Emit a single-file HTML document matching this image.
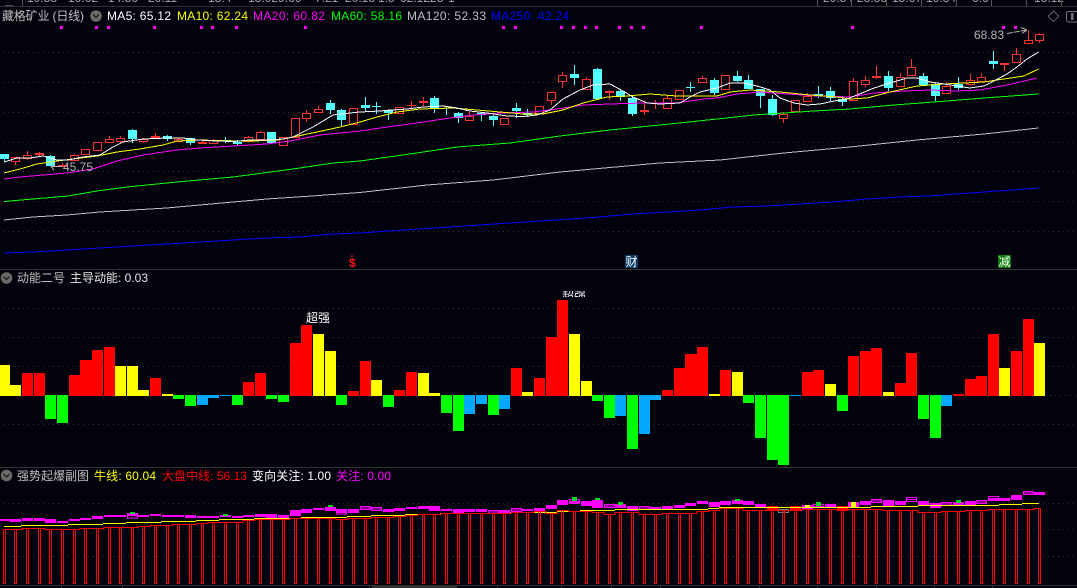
<!DOCTYPE html>
<html lang="zh"><head><meta charset="utf-8"><title>藏格矿业 (日线)</title>
<style>
html,body{margin:0;padding:0;background:#02030c;width:1077px;height:588px;overflow:hidden}
svg{display:block;shape-rendering:crispEdges}
text{font-family:"Liberation Sans","Noto Sans CJK SC",sans-serif;font-size:12px}
.r{shape-rendering:auto}
</style></head><body>
<svg width="1077" height="588" viewBox="0 0 1077 588" xmlns="http://www.w3.org/2000/svg">
<defs><clipPath id="cp"><rect x="555" y="291" width="40" height="6"/></clipPath></defs>
<rect width="1077" height="588" fill="#02030c"/>

<!-- top strip -->
<g fill="#a8a8a8" font-size="11">
<text x="27" y="2">19.58</text><text x="68" y="2">10.62</text><text x="108" y="2">14.56</text><text x="148" y="2">20.11</text><text x="208" y="2">18.4</text><text x="248" y="2">13.02</text><text x="278" y="2">9.66</text><text x="315" y="2">7.21</text><text x="345" y="2">20.18</text>
<text x="378" y="2">1.5</text><text x="400" y="2">62.1225</text><text x="448" y="2">1</text>
<text x="823" y="2">20.54</text><text x="857" y="2">23.88</text><text x="892" y="2">15.67</text><text x="926" y="2">10.34</text><text x="972" y="2">6.6</text><text x="1034" y="2">13.12</text>
</g>
<path d="M5 5.5h8M22.500 0V6M817.500 0V6M851.500 0V6M886.500 0V6M921.500 0V6M956.500 0V6M991.500 0V6M1026.500 0V6M1061.500 0V6" stroke="#555" fill="none"/>
<path d="M0 6.500H1077M0 269.500H1077M0 467.500H1077M0 585.500H1077" stroke="#333" fill="none"/>

<!-- grid -->
<path d="M3 52.500H1077M3 82.500H1077M3 112.500H1077M3 142.500H1077M3 171.500H1077M3 201.500H1077M3 231.500H1077M3 308.500H1077M3 337.500H1077M3 366.500H1077M1050 395.500H1077M3 424.500H1077M3 503.500H1077M3 529.500H1077M3 556.500H1077" stroke="#333" stroke-dasharray="1 4" fill="none"/>

<!-- magenta signal dots -->
<path fill="#f0f" d="M60 26h3v3h-3zM95 26h3v3h-3zM107 26h3v3h-3zM153 26h3v3h-3zM200 26h3v3h-3zM211 26h3v3h-3zM235 26h3v3h-3zM304 26h3v3h-3zM502 26h3v3h-3zM514 26h3v3h-3zM560 26h3v3h-3zM572 26h3v3h-3zM584 26h3v3h-3zM595 26h3v3h-3zM618 26h3v3h-3zM630 26h3v3h-3zM642 26h3v3h-3zM700 26h3v3h-3zM851 26h3v3h-3zM1002 26h3v3h-3zM1014 26h3v3h-3z"/>

<!-- candles cyan -->
<path fill="#54ffff" d="M0 154h9V159h-9zM46 156h9V166h-9zM128 130h9V139h-9zM163 136h9V139h-9zM186 138h9V143h-9zM221 140h10V141h-10zM233 142h9V144h-9zM267 132h9V143h-9zM326 103h9V110h-9zM337 110h9V120h-9zM361 105h9V108h-9zM372 106h9V107h-9zM384 110h9V113h-9zM430 98h9V108h-9zM454 113h9V118h-9zM477 113h9V115h-9zM489 116h9V120h-9zM512 108h9V111h-9zM523 113h9V115h-9zM570 74h9V78h-9zM593 69h9V99h-9zM616 91h9V97h-9zM628 98h9V114h-9zM686 87h9V88h-9zM710 80h9V93h-9zM733 76h9V81h-9zM744 80h9V89h-9zM756 89h9V96h-9zM768 99h9V115h-9zM814 94h9V96h-9zM826 91h9V98h-9zM838 99h9V102h-9zM884 76h9V88h-9zM919 76h9V85h-9zM931 84h9V96h-9zM954 84h9V88h-9zM989 61h9V64h-9z"/>
<path fill="none" stroke="#54ffff" d="M4.500 154V161M50.500 155V166M132.500 129V143M167.500 135V141M190.500 138V145M225.500 137V143M237.500 140V145M330.500 100V114M341.500 109V126M365.500 97V111M376.500 102V114M388.500 109V120M434.500 96V113M446.500 108V115M458.500 112V123M481.500 112V121M493.500 115V126M516.500 103V118M527.500 109V117M574.500 65V85M597.500 68V99M620.500 90V101M632.500 96V116M690.500 82V92M714.500 78V95M737.500 71V82M748.500 75V89M760.500 89V108M772.500 95V116M818.500 86V98M830.500 87V101M842.500 96V106M888.500 71V91M923.500 73V85M935.500 83V101M958.500 77V90M993.500 51V69"/>

<!-- candles red hollow -->
<path fill="none" stroke="#ff3232" d="M11.500 157.500h8v4h-8zM15.500 161.500V165M23.500 155.500h8v3h-8zM27.500 151V155.500M27.500 158.500V160M70.500 155.500h8v5h-8zM74.500 154V155.500M81.500 149.500h8v5h-8zM93.500 142.500h8v8h-8zM105.500 139.500h8v3h-8zM109.500 136V139.500M109.500 142.500V143M116.500 138.500h8v3h-8zM120.500 136V138.500M120.500 141.500V143M139.500 139.500h8v2h-8zM143.500 138V139.500M143.500 141.500V143M174.500 139.500h8v2h-8zM178.500 138V139.500M198.500 142.500h8v1h-8zM202.500 140V142.500M209.500 140.500h8v3h-8zM213.500 139V140.500M244.500 137.500h8v4h-8zM248.500 136V137.500M256.500 132.500h8v7h-8zM260.500 131V132.500M279.500 137.500h8v8h-8zM291.500 118.500h8v19h-8zM302.500 113.500h8v5h-8zM306.500 110V113.500M306.500 118.500V122M314.500 109.500h8v3h-8zM318.500 106V109.500M349.500 108.500h8v16h-8zM395.500 107.500h8v6h-8zM465.500 116.500h8v4h-8zM469.500 112V116.500M500.500 118.500h8v6h-8zM535.500 106.500h8v7h-8zM547.500 92.500h8v8h-8zM551.500 100.500V105M558.500 75.500h8v6h-8zM562.500 72V75.500M562.500 81.500V88M582.500 79.500h8v10h-8zM586.500 77V79.500M663.500 98.500h8v10h-8zM667.500 95V98.500M675.500 90.500h8v9h-8zM698.500 78.500h8v4h-8zM702.500 76V78.500M721.500 75.500h8v14h-8zM779.500 114.500h8v4h-8zM783.500 112V114.500M783.500 118.500V123M791.500 100.500h8v11h-8zM803.500 96.500h8v5h-8zM807.500 93V96.500M849.500 81.500h8v19h-8zM853.500 78V81.500M861.500 80.500h8v4h-8zM865.500 76V80.500M865.500 84.500V87M896.500 77.500h8v9h-8zM900.500 73V77.500M907.500 67.500h8v8h-8zM911.500 59V67.500M942.500 86.500h8v7h-8zM946.500 82V86.500M966.500 80.500h8v4h-8zM970.500 74V80.500M970.500 84.500V86M977.500 77.500h8v4h-8zM981.500 73V77.500M1012.500 54.500h8v8h-8zM1016.500 48V54.500M1024.500 40.500h8v3h-8zM1028.500 30V40.500M1035.500 34.500h8v6h-8zM1039.500 33V34.500M1039.500 40.500V43"/>
<!-- candles red solid -->
<path fill="#ff3232" d="M35 153h9V155h-9zM58 165h9V167h-9zM151 136h9V138h-9zM407 105h9V106h-9zM419 101h9V103h-9zM605 91h9V93h-9zM640 110h9V112h-9zM651 103h9V104h-9zM872 76h9V78h-9zM1000 63h9V65h-9z"/>
<path fill="none" stroke="#ff3232" d="M39.500 152V156M62.500 163V167M155.500 133V138M411.500 101V108M423.500 97V106M609.500 90V100M644.500 100V115M655.500 100V109M876.500 66V79M1004.500 63V71"/>

<!-- MA lines -->
<g fill="none">
<polyline stroke="#0000ff" points="4,253 33,252 67,250 100,248 133,246 167,244 200,242 233,240 267,238 300,237 333,234 360,233 420,229 480,225 540,221 600,217 633,214 667,212 700,210 733,207 767,206 800,204 833,202 867,199 900,197 929,196 984,192 1039,188"/>
<polyline stroke="#c0c0c0" points="4,220 33,217 67,215 100,212 133,210 167,208 200,205 233,202 267,199 312,196 360,192.500 427,185 493,180 560,172 660,163 720,160 784,153 850,147 917,140 984,134 1038.500,128"/>
<polyline stroke="#00ff00" points="4,201.500 33,199 68,196 97,191 127,187 177,182 233,177 293,169 333,163 360,161 403,155 457,147 510,143 560,136 610,130 660,125 717,119 754,115 814,111 850,109 894,105 934,102 984,98 1038.500,94"/>
<polyline stroke="#ff00ff" points="4,179 20,177 43,175 67,173 93,169 117,161 143,155 177,150 200,148 233,146 267,144 290,141 320,135 360,131 387,127 410,124 443,119 473,115 500,113 533,112 557,109 583,105 610,104 643,103 677,103 703,99 717,98 737,94 760,92 787,94 817,96 850,97 874,93 904,91 930,90 957,91 980,90 1007,85 1037,78"/>
<polyline stroke="#ffff00" points="4,173 20,169 37,164 57,161 73,159 97,156 117,152 140,149 163,145 177,141 200,140 233,141 253,141 277,140 293,137 317,132 340,127 360,122 377,117 397,112 420,109 453,108 477,110 500,112 523,114 543,114 563,110 583,103 607,97 627,96 650,94 677,96 703,96 717,96 730,92 750,90 780,92 810,95 837,97 850,99 867,98 890,92 917,86 944,84 984,82 997,80 1024,76 1038.500,69"/>
<polyline stroke="#ffffff" points="4,162 17,158 30,158 43,156 57,160 68,160 83,157 100,155 113,147 123,142 143,139 167,138 183,138 197,140 217,141 233,141.500 250,140 267,140 283,139 293,137 313,127 333,115 350,113 360,112 380,111 393,110 407,109 423,107 443,106 457,108 470,111 487,113 507,116 523,116.500 537,115 550,110 563,99 580,90 593,85 610,84 623,91 633,97 647,103 660,104 680,103 690,97 700,92 717,88 730,83 744,83 757,86 770,90 780,98 794,103 807,105 820,104 834,101 847,99 857,95 874,88 890,83 907,78 917,78 930,82 944,84 957,86 970,88 984,86 994,81 1007,74 1017,67 1027,59 1038.500,52"/>
</g>

<!-- price annotations -->
<g class="r" fill="none" stroke="#b4b4b4" stroke-width="1" style="shape-rendering:auto">
<path d="M62 166.500H52M55 163.500L51 166.500L54 170"/>
<path d="M1007 33.500L1027 30M1021 27.500L1027 30L1022 33.500" stroke-dasharray="6 1"/>
<path d="M1053.500 11L1058.800 16.300L1053.500 21.600L1048.200 16.300Z" stroke="#666"/>
<rect x="1066.500" y="11.500" width="14" height="10.500" rx="2" stroke="#777"/>
<rect x="1071" y="13" width="2.500" height="7" fill="#777" stroke="none"/>
</g>
<text x="63" y="171" fill="#b4b4b4" textLength="30" lengthAdjust="spacing">45.75</text>
<text x="974" y="39" fill="#b4b4b4" textLength="30" lengthAdjust="spacing">68.83</text>

<!-- header text -->
<text x="2" y="20" fill="#c0c0c0" textLength="82" lengthAdjust="spacing">藏格矿业 (日线)</text>
<g class="r" style="shape-rendering:auto">
<circle cx="96" cy="16" r="5.800" fill="#6a6a6a"/><path d="M93 14.500L96 17.500L99 14.500" stroke="#1c1c1c" stroke-width="1.300" fill="none"/>
<circle cx="6.500" cy="278" r="5.800" fill="#6a6a6a"/><path d="M3.500 276.500L6.500 279.500L9.500 276.500" stroke="#1c1c1c" stroke-width="1.300" fill="none"/>
<circle cx="6.500" cy="475.500" r="5.800" fill="#6a6a6a"/><path d="M3.500 474L6.500 477L9.500 474" stroke="#1c1c1c" stroke-width="1.300" fill="none"/>
</g>
<text x="107" y="20" fill="#ffffff" textLength="64" lengthAdjust="spacing">MA5: 65.12</text>
<text x="177" y="20" fill="#ffff00" textLength="71" lengthAdjust="spacing">MA10: 62.24</text>
<text x="253" y="20" fill="#ff00ff" textLength="72" lengthAdjust="spacing">MA20: 60.82</text>
<text x="331" y="20" fill="#00ff00" textLength="71" lengthAdjust="spacing">MA60: 58.16</text>
<text x="407" y="20" fill="#c0c0c0" textLength="79" lengthAdjust="spacing">MA120: 52.33</text>
<text x="491" y="20" fill="#0000ff" textLength="78" lengthAdjust="spacing">MA250: 42.24</text>

<!-- event markers -->
<text x="349" y="267" fill="#ff1010" font-weight="bold" style="font-size:12px" textLength="7">$</text>
<path d="M352 255v2" stroke="#ff1010"/>
<rect x="625" y="255" width="13" height="13" fill="#0a3a66"/>
<text x="625.500" y="266" fill="#fff">财</text>
<rect x="998" y="255" width="13" height="13" fill="#0a7f0a"/>
<text x="998.500" y="266" fill="#fff">减</text>

<!-- panel 2 title -->
<text x="17" y="282" fill="#c0c0c0" textLength="48" lengthAdjust="spacing">动能二号</text>
<text x="70" y="282" fill="#e8e8e8" textLength="78" lengthAdjust="spacing">主导动能: 0.03</text>

<!-- energy bars -->
<path fill="#ff0000" d="M22 373h11V396h-11zM34 373h11V396h-11zM69 375h11V396h-11zM80 360h12V396h-12zM92 350h11V396h-11zM104 347h11V396h-11zM150 378h11V396h-11zM243 382h11V396h-11zM255 373h11V396h-11zM290 343h11V396h-11zM301 325h11V396h-11zM348 391h11V396h-11zM360 361h11V396h-11zM394 390h11V396h-11zM406 372h11V396h-11zM511 368h11V396h-11zM534 378h11V396h-11zM546 337h11V396h-11zM557 300h11V396h-11zM662 390h11V396h-11zM674 368h11V396h-11zM685 354h12V396h-12zM697 347h11V396h-11zM720 370h11V396h-11zM802 372h11V396h-11zM813 370h11V396h-11zM848 356h11V396h-11zM860 351h11V396h-11zM871 348h11V396h-11zM895 383h11V396h-11zM906 353h11V396h-11zM953 394h11V396h-11zM965 379h11V396h-11zM976 376h11V396h-11zM988 334h11V396h-11zM1011 351h11V396h-11zM1023 319h11V396h-11z"/>
<path fill="#ffff00" d="M0 365h10V396H0zM10 385h11V396H10zM115 366h11V396h-11zM127 366h11V396h-11zM138 390h11V396h-11zM162 394h11V396h-11zM313 334h11V396h-11zM325 351h11V396h-11zM371 380h11V396h-11zM418 373h11V396h-11zM429 393h11V396h-11zM522 392h11V396h-11zM569 334h11V396h-11zM581 381h11V396h-11zM709 394h11V396h-11zM732 372h11V396h-11zM825 384h11V396h-11zM883 392h11V396h-11zM999 368h11V396h-11zM1034 343h11V396h-11z"/>
<path fill="#00ff00" d="M45 395h11V419h-11zM57 395h11V423h-11zM173 395h11V399h-11zM185 395h11V406h-11zM232 395h11V405h-11zM266 395h11V399h-11zM278 395h11V402h-11zM336 395h11V405h-11zM383 395h11V407h-11zM441 395h11V413h-11zM453 395h11V431h-11zM488 395h11V415h-11zM592 395h11V401h-11zM604 395h11V418h-11zM627 395h11V449h-11zM743 395h11V403h-11zM755 395h11V438h-11zM767 395h11V460h-11zM778 395h11V465h-11zM837 395h11V411h-11zM918 395h11V419h-11zM930 395h11V438h-11z"/>
<path fill="#00a8ff" d="M197 395h11V405h-11zM208 395h11V398h-11zM220 395h11V396h-11zM464 395h11V414h-11zM476 395h11V404h-11zM499 395h11V409h-11zM615 395h11V416h-11zM639 395h11V434h-11zM650 395h11V400h-11zM790 395h11V396h-11zM941 395h11V406h-11z"/>
<text x="306" y="322" fill="#ffffff">超强</text>
<text x="562" y="300" fill="#ffffff" clip-path="url(#cp)">超强</text>

<!-- panel 3 title -->
<text x="17" y="480" fill="#c0c0c0" textLength="72" lengthAdjust="spacing">强势起爆副图</text>
<text x="94" y="480" fill="#ffff00" textLength="62" lengthAdjust="spacing">牛线: 60.04</text>
<text x="162" y="480" fill="#ff0000" textLength="85" lengthAdjust="spacing">大盘中线: 56.13</text>
<text x="252" y="480" fill="#ffffff" textLength="79" lengthAdjust="spacing">变向关注: 1.00</text>
<text x="336" y="480" fill="#ff00ff" textLength="55" lengthAdjust="spacing">关注: 0.00</text>

<!-- panel 3 magenta blocks -->
<path fill="#ff00ff" d="M0 519h10V521H0zM10 519h11V522H10zM22 518h11V521H22zM34 518h11V521H34zM45 519h11V523H45zM57 521h11V523H57zM69 519h11V521H69zM80 518h11V520H80zM92 516h11V519H92zM104 515h11V517h-11zM115 515h11V517h-11zM127 513h11V515h-11zM138 515h11V517h-11zM150 514h11V516h-11zM162 515h11V517h-11zM173 515h11V517h-11zM185 515h11V518h-11zM197 516h11V518h-11zM208 516h11V518h-11zM220 515h11V517h-11zM232 516h11V518h-11zM243 515h11V517h-11zM255 514h11V517h-11zM266 514h11V518h-11zM278 515h11V518h-11zM290 510h11V516h-11zM301 509h11V513h-11zM313 508h11V510h-11zM325 507h11V511h-11zM336 509h11V512h-11zM348 509h11V513h-11zM383 509h11V512h-11zM394 508h11V511h-11zM406 507h11V509h-11zM418 506h11V509h-11zM429 506h11V511h-11zM441 509h11V511h-11zM453 509h11V513h-11zM464 509h11V512h-11zM476 509h11V512h-11zM499 510h11V513h-11zM522 509h11V511h-11zM534 508h11V511h-11zM546 505h11V509h-11zM557 500h11V505h-11zM569 501h11V504h-11zM581 501h11V506h-11zM592 500h11V508h-11zM615 504h11V508h-11zM627 506h11V511h-11zM650 507h11V510h-11zM662 506h11V510h-11zM674 505h11V508h-11zM685 503h11V506h-11zM697 501h11V504h-11zM709 502h11V507h-11zM720 501h11V505h-11zM732 500h11V504h-11zM743 501h11V505h-11zM755 504h11V507h-11zM802 505h11V509h-11zM825 504h11V508h-11zM848 502h11V508h-11zM860 501h11V505h-11zM883 500h11V506h-11zM895 501h11V505h-11zM918 501h11V506h-11zM930 503h11V508h-11zM953 502h11V506h-11zM965 501h11V505h-11zM988 498h11V501h-11zM999 498h11V501h-11zM1011 495h11V500h-11zM1034 492h11V495h-11z"/>
<path fill="none" stroke="#ff00ff" d="M127.500 515.500h10v2.500h-10zM336.500 512.500h10v1.500h-10zM360.500 506.500h10v3h-10zM360.500 508h10M371.500 507.500h10v3h-10zM371.500 509h10M488.500 510.500h10v3h-10zM488.500 512h10M511.500 508.500h10v3h-10zM511.500 510h10M569.500 499.500h10v4h-10zM604.500 504.500h10v3h-10zM604.500 506h10M639.500 506.500h10v3h-10zM639.500 508h10M813.500 504.500h10v2h-10zM871.500 499.500h10v3h-10zM871.500 501h10M906.500 497.500h10v4h-10zM906.500 499.500h10M941.500 502.500h10v3h-10zM941.500 504h10M976.500 500.500h10v3h-10zM976.500 502h10M988.500 496.500h10v4h-10zM1023.500 491.500h10v3h-10zM1023.500 493h10"/>
<path fill="#ff0000" d="M767 506h11V511h-11zM790 506h11V510h-11zM837 506h11V510h-11z"/>
<rect x="778.500" y="509.500" width="10" height="3" fill="none" stroke="#808080"/>
<path fill="#ffff00" d="M805 505h5V508h-5zM851 502h5V508h-5z"/>
<path fill="#00d820" d="M130 512h5V514h-5zM223 514h5V516h-5zM328 505h5V507h-5zM572 497h5V501h-5zM595 498h5V500h-5zM618 502h5V505h-5zM735 499h5V501h-5zM816 502h5V506h-5zM956 500h5V503h-5z"/>

<!-- bull line -->
<path fill="none" stroke="#ffff00" d="M4 526.500H21M21 525.500H68M68 524.500H103M103 523.500H126M126 522.500H161M161 521.500H196M196 520.500H219M219 519.500H254M254 518.500H301M301 517.500H347M347 516.500H371M371 515.500H405M405 514.500H440M440 513.500H510M510 512.500H557M557 511.500H580M580 510.500H615M615 509.500H708M708 508.500H719M719 507.500H871M871 506.500H918M918 505.500H999M999 504.500H1022M1022 503.500H1039"/>

<!-- red line and sticks -->
<polyline fill="none" stroke="#ff0000" points="3,529.500 22,529.500 22,528.500 45,528.500 45,529.500 80,529.500 80,528.500 104,528.500 104,527.500 138,527.500 138,526.500 150,526.500 150,525.500 173,525.500 173,524.500 197,524.500 197,523.500 208,523.500 208,522.500 243,522.500 243,520.500 255,520.500 255,519.500 290,519.500 290,518.500 336,518.500 336,519.500 348,519.500 348,518.500 371,518.500 371,517.500 394,517.500 394,516.500 406,516.500 406,515.500 418,515.500 418,514.500 441,514.500 441,513.500 511,513.500 511,512.500 534,512.500 534,511.500 546,511.500 546,513.500 557,513.500 557,510.500 569,510.500 569,511.500 592,511.500 592,512.500 604,512.500 604,514.500 615,514.500 615,512.500 639,512.500 639,514.500 662,514.500 662,513.500 697,513.500 697,511.500 709,511.500 709,510.500 720,510.500 720,508.500 743,508.500 743,510.500 767,510.500 767,508.500 778,508.500 778,510.500 802,510.500 802,509.500 837,509.500 837,510.500 848,510.500 848,509.500 883,509.500 883,510.500 918,510.500 918,512.500 941,512.500 941,511.500 965,511.500 965,510.500 988,510.500 988,509.500 1034,509.500 1034,508.500 1040,508.500"/>
<path fill="none" stroke="#ff0000" d="M3.500 529V583.500h2V529M14.500 529V583.500h2V529M26.500 528V583.500h2V528M38.500 528V583.500h2V528M49.500 529V583.500h2V529M61.500 529V583.500h2V529M73.500 529V583.500h2V529M84.500 528V583.500h2V528M96.500 528V583.500h2V528M108.500 527V583.500h2V527M119.500 527V583.500h2V527M131.500 527V583.500h2V527M142.500 526V583.500h2V526M154.500 525V583.500h2V525M166.500 525V583.500h2V525M177.500 524V583.500h2V524M189.500 524V583.500h2V524M201.500 523V583.500h2V523M212.500 522V583.500h2V522M224.500 522V583.500h2V522M236.500 522V583.500h2V522M247.500 520V583.500h2V520M259.500 519V583.500h2V519M270.500 519V583.500h2V519M282.500 519V583.500h2V519M294.500 518V583.500h2V518M305.500 518V583.500h2V518M317.500 518V583.500h2V518M329.500 518V583.500h2V518M340.500 519V583.500h2V519M352.500 518V583.500h2V518M364.500 518V583.500h2V518M375.500 517V583.500h2V517M387.500 517V583.500h2V517M398.500 516V583.500h2V516M410.500 515V583.500h2V515M422.500 514V583.500h2V514M433.500 514V583.500h2V514M445.500 513V583.500h2V513M457.500 513V583.500h2V513M468.500 513V583.500h2V513M480.500 513V583.500h2V513M492.500 513V583.500h2V513M503.500 513V583.500h2V513M515.500 512V583.500h2V512M526.500 512V583.500h2V512M538.500 511V583.500h2V511M550.500 513V583.500h2V513M561.500 510V583.500h2V510M573.500 511V583.500h2V511M585.500 511V583.500h2V511M596.500 512V583.500h2V512M608.500 514V583.500h2V514M619.500 512V583.500h2V512M631.500 512V583.500h2V512M643.500 514V583.500h2V514M654.500 514V583.500h2V514M666.500 513V583.500h2V513M678.500 513V583.500h2V513M689.500 513V583.500h2V513M701.500 511V583.500h2V511M713.500 510V583.500h2V510M724.500 508V583.500h2V508M736.500 508V583.500h2V508M747.500 510V583.500h2V510M759.500 510V583.500h2V510M771.500 508V583.500h2V508M782.500 510V583.500h2V510M794.500 510V583.500h2V510M806.500 509V583.500h2V509M817.500 509V583.500h2V509M829.500 509V583.500h2V509M841.500 510V583.500h2V510M852.500 509V583.500h2V509M864.500 509V583.500h2V509M875.500 509V583.500h2V509M887.500 510V583.500h2V510M899.500 510V583.500h2V510M910.500 510V583.500h2V510M922.500 512V583.500h2V512M934.500 512V583.500h2V512M945.500 511V583.500h2V511M957.500 511V583.500h2V511M969.500 510V583.500h2V510M980.500 510V583.500h2V510M992.500 509V583.500h2V509M1003.500 509V583.500h2V509M1015.500 509V583.500h2V509M1027.500 509V583.500h2V509M1038.500 508V583.500h2V508"/>

<!-- footer ticks and scrollbar -->
<path fill="none" stroke="#333" d="M61.500 586V588M122.500 586V588M369.500 586V588M497.500 586V588M561.500 586V588M611.500 586V588M660.500 586V588M759.500 586V588M817.500 586V588M876.500 586V588M934.500 586V588M992.500 586V588"/>
<rect x="372" y="586" width="85" height="2" fill="#333"/>
</svg>
</body></html>
